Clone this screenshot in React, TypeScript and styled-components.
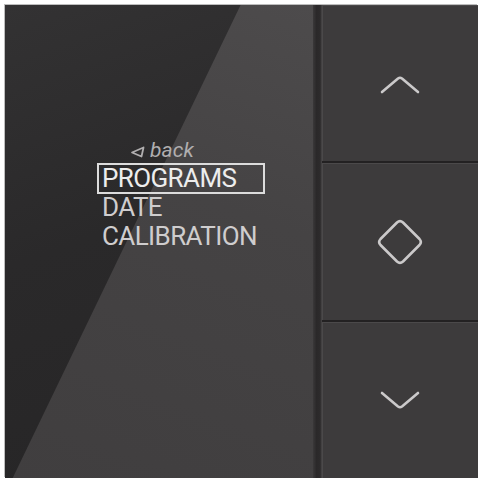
import React from 'react'
import styled, { createGlobalStyle } from 'styled-components'

const GlobalStyle = createGlobalStyle`
   html, body {
      margin: 0;
      padding: 0;
      background: #ffffff;
   }
   body {
      font-family: Roboto, 'Liberation Sans', sans-serif;
   }
`

const Device = styled.div`
   display: flex;
   width: 473px;
   height: 473px;
   margin: 5px 0 0 5px;
   background: #2a2829;
   box-shadow: -1px -1px 0 #bdbdbd;
`

const Screen = styled.div`
   position: relative;
   width: 308px;
   height: 100%;
   overflow: hidden;
   background: linear-gradient(160deg, #333233 0%, #2a292a 45%, #262526 100%);

   /* glossy reflection across the glass */
   &::before {
      content: '';
      position: absolute;
      inset: 0;
      background: linear-gradient(200deg, #4d4b4c 0%, #454344 40%, #403e3f 100%);
      clip-path: polygon(76.5% 0, 100% 0, 100% 100%, 2.5% 100%);
   }
`

const Divider = styled.div`
   width: 9px;
   height: 100%;
   background: linear-gradient(90deg, #3a3839 0%, #2a2829 40%, #2d2b2c 80%, #4a4849 100%);
`

const Menu = styled.div`
   position: relative;
   z-index: 1;
   display: flex;
   flex-direction: column;
   margin: 135px 0 0 93px;
   width: 166px;
`

const BackRow = styled.div`
   display: flex;
   align-items: center;
   gap: 5px;
   height: 21px;
   margin: 0 0 3px 32px;
   color: #b0aeaf;
   font-size: 21px;
   line-height: 21px;
   font-style: italic;
   letter-spacing: 0.1px;
`

const Item = styled.div<{ $selected?: boolean }>`
   height: 29px;
   line-height: 29px;
   padding-left: 4px;
   font-size: 26px;
   letter-spacing: -0.6px;
   white-space: nowrap;
   color: ${(p) => (p.$selected ? '#ededed' : '#cfcdce')};
   outline: ${(p) => (p.$selected ? '2px solid #dcdcdc' : 'none')};
   outline-offset: -1px;
`

const Keys = styled.div`
   display: flex;
   flex-direction: column;
   gap: 2px;
   flex: 1;
   background: #232122;
`

const Key = styled.button`
   flex: 1;
   display: flex;
   align-items: center;
   justify-content: center;
   border: none;
   padding: 0;
   background: #3d3b3c;
   box-shadow: inset 1px 1px 0 #4b494a;
   cursor: pointer;
`

const Glyph = styled.svg`
   display: block;
   fill: none;
   stroke: #cbc9ca;
   stroke-width: 2.6;
   stroke-linecap: round;
   stroke-linejoin: round;
`

const BackArrow = () => (
   <svg width="15" height="12" viewBox="0 0 15 12" style={{ marginTop: 3 }}>
      <path
         d="M13.5 1.5 L2 6.5 L11.5 10.5 Z"
         fill="none"
         stroke="#b0aeaf"
         strokeWidth="1.8"
         strokeLinejoin="round"
      />
   </svg>
)

const menuItems = ['PROGRAMS', 'DATE', 'CALIBRATION']

export default function App() {
   return (
      <>
         <GlobalStyle />
         <Device>
            <Screen>
               <Menu>
                  <BackRow>
                     <BackArrow />
                     back
                  </BackRow>
                  {menuItems.map((label, i) => (
                     <Item key={label} $selected={i === 0}>
                        {label}
                     </Item>
                  ))}
               </Menu>
            </Screen>
            <Divider />
            <Keys>
               <Key aria-label="up">
                  <Glyph width="40" height="20" viewBox="0 0 40 20" style={{ marginTop: 3 }}>
                     <path d="M2 17 L18 3.5 Q20 2 22 3.5 L38 17" />
                  </Glyph>
               </Key>
               <Key aria-label="ok">
                  <Glyph width="48" height="48" viewBox="0 0 48 48" style={{ marginTop: 2 }}>
                     <path d="M21 4.5 Q24 1.8 27 4.5 L43.5 21 Q46.2 24 43.5 27 L27 43.5 Q24 46.2 21 43.5 L4.5 27 Q1.8 24 4.5 21 Z" />
                  </Glyph>
               </Key>
               <Key aria-label="down">
                  <Glyph width="40" height="20" viewBox="0 0 40 20" style={{ marginTop: 1 }}>
                     <path d="M2 3 L18 16.5 Q20 18 22 16.5 L38 3" />
                  </Glyph>
               </Key>
            </Keys>
         </Device>
      </>
   )
}
